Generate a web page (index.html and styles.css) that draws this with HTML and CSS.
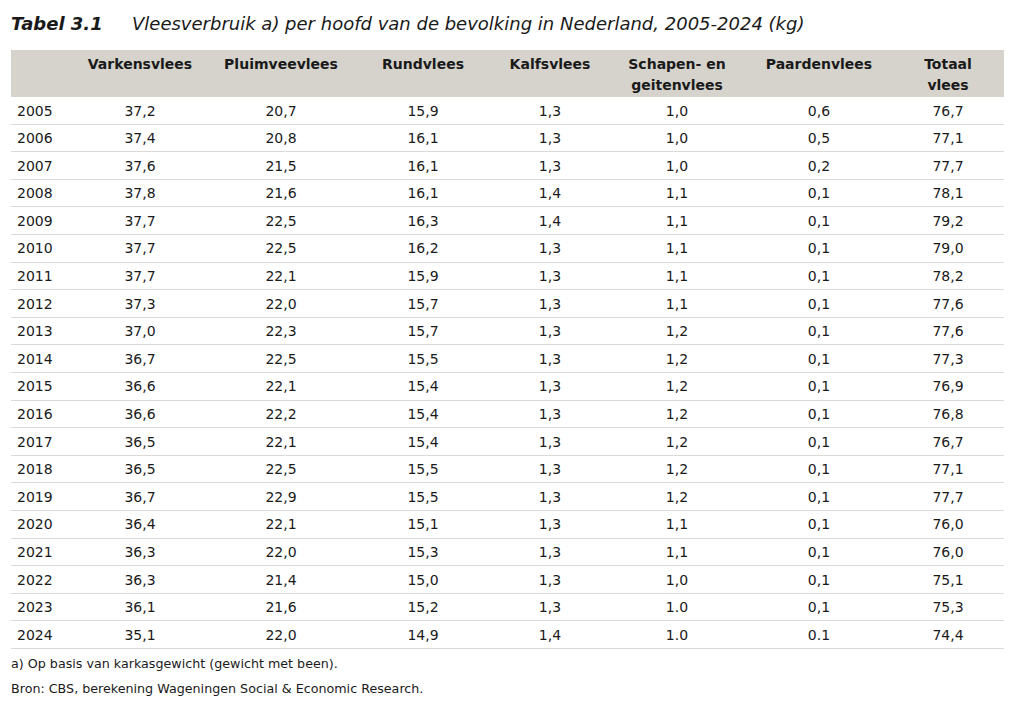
FILE: index.html
```html
<!DOCTYPE html>
<html lang="nl">
<head>
<meta charset="utf-8">
<title>Tabel 3.1</title>
<link rel="stylesheet" href="styles.css">
</head>
<body>
<div class="page">
  <h1 class="title"><span class="label">Tabel 3.1</span><span class="caption">Vleesverbruik a) per hoofd van de bevolking in Nederland, 2005-2024 (kg)</span></h1>
  <table class="data">
    <colgroup>
      <col class="c-year"><col class="c1"><col class="c2"><col class="c3"><col class="c4"><col class="c5"><col class="c6"><col class="c7">
    </colgroup>
    <thead>
      <tr><th></th><th>Varkensvlees</th><th>Pluimveevlees</th><th>Rundvlees</th><th>Kalfsvlees</th><th>Schapen- en<br>geitenvlees</th><th>Paardenvlees</th><th>Totaal<br>vlees</th></tr>
    </thead>
    <tbody>
      <tr><td>2005</td><td>37,2</td><td>20,7</td><td>15,9</td><td>1,3</td><td>1,0</td><td>0,6</td><td>76,7</td></tr>
      <tr><td>2006</td><td>37,4</td><td>20,8</td><td>16,1</td><td>1,3</td><td>1,0</td><td>0,5</td><td>77,1</td></tr>
      <tr><td>2007</td><td>37,6</td><td>21,5</td><td>16,1</td><td>1,3</td><td>1,0</td><td>0,2</td><td>77,7</td></tr>
      <tr><td>2008</td><td>37,8</td><td>21,6</td><td>16,1</td><td>1,4</td><td>1,1</td><td>0,1</td><td>78,1</td></tr>
      <tr><td>2009</td><td>37,7</td><td>22,5</td><td>16,3</td><td>1,4</td><td>1,1</td><td>0,1</td><td>79,2</td></tr>
      <tr><td>2010</td><td>37,7</td><td>22,5</td><td>16,2</td><td>1,3</td><td>1,1</td><td>0,1</td><td>79,0</td></tr>
      <tr><td>2011</td><td>37,7</td><td>22,1</td><td>15,9</td><td>1,3</td><td>1,1</td><td>0,1</td><td>78,2</td></tr>
      <tr><td>2012</td><td>37,3</td><td>22,0</td><td>15,7</td><td>1,3</td><td>1,1</td><td>0,1</td><td>77,6</td></tr>
      <tr><td>2013</td><td>37,0</td><td>22,3</td><td>15,7</td><td>1,3</td><td>1,2</td><td>0,1</td><td>77,6</td></tr>
      <tr><td>2014</td><td>36,7</td><td>22,5</td><td>15,5</td><td>1,3</td><td>1,2</td><td>0,1</td><td>77,3</td></tr>
      <tr><td>2015</td><td>36,6</td><td>22,1</td><td>15,4</td><td>1,3</td><td>1,2</td><td>0,1</td><td>76,9</td></tr>
      <tr><td>2016</td><td>36,6</td><td>22,2</td><td>15,4</td><td>1,3</td><td>1,2</td><td>0,1</td><td>76,8</td></tr>
      <tr><td>2017</td><td>36,5</td><td>22,1</td><td>15,4</td><td>1,3</td><td>1,2</td><td>0,1</td><td>76,7</td></tr>
      <tr><td>2018</td><td>36,5</td><td>22,5</td><td>15,5</td><td>1,3</td><td>1,2</td><td>0,1</td><td>77,1</td></tr>
      <tr><td>2019</td><td>36,7</td><td>22,9</td><td>15,5</td><td>1,3</td><td>1,2</td><td>0,1</td><td>77,7</td></tr>
      <tr><td>2020</td><td>36,4</td><td>22,1</td><td>15,1</td><td>1,3</td><td>1,1</td><td>0,1</td><td>76,0</td></tr>
      <tr><td>2021</td><td>36,3</td><td>22,0</td><td>15,3</td><td>1,3</td><td>1,1</td><td>0,1</td><td>76,0</td></tr>
      <tr><td>2022</td><td>36,3</td><td>21,4</td><td>15,0</td><td>1,3</td><td>1,0</td><td>0,1</td><td>75,1</td></tr>
      <tr><td>2023</td><td>36,1</td><td>21,6</td><td>15,2</td><td>1,3</td><td>1.0</td><td>0,1</td><td>75,3</td></tr>
      <tr><td>2024</td><td>35,1</td><td>22,0</td><td>14,9</td><td>1,4</td><td>1.0</td><td>0.1</td><td>74,4</td></tr>
    </tbody>
  </table>
  <p class="note">a) Op basis van karkasgewicht (gewicht met been).</p>
  <p class="note">Bron: CBS, berekening Wageningen Social &amp; Economic Research.</p>
</div>
</body>
</html>
```
FILE: styles.css
```css
html, body {
  margin: 0;
  padding: 0;
  background: #ffffff;
}
body {
  font-family: "DejaVu Sans", Verdana, sans-serif;
  color: #1a1a1a;
}
.page {
  padding: 11px 0 0 11px;
}
.title {
  display: flex;
  margin: 0 0 13px 0;
  font-size: 18px;
  line-height: 26px;
  font-style: italic;
  font-weight: normal;
}
.title .label {
  width: 121px;
  font-weight: bold;
}
.data {
  border-collapse: collapse;
  table-layout: fixed;
  width: 993px;
  font-size: 14px;
}
.c-year { width: 61px; }
.c1 { width: 136px; }
.c2 { width: 146px; }
.c3 { width: 138px; }
.c4 { width: 116px; }
.c5 { width: 138px; }
.c6 { width: 146px; }
.c7 { width: 112px; }
.data th {
  background: #d6d3cc;
  font-weight: bold;
  line-height: 21px;
  padding: 4px 0 1px 0;
  text-align: center;
  vertical-align: top;
  height: 42px;
}
.data td {
  line-height: 21px;
  padding: 3.5px 0 2.1px 0;
  text-align: center;
  border-bottom: 1px solid #dcdad4;
}
.data td:first-child {
  text-align: left;
  padding-left: 6px;
}
.note {
  margin: 3px 0 0 0;
  font-size: 12.7px;
  line-height: 24px;
}
.note + .note {
  margin-top: 1px;
}
```
